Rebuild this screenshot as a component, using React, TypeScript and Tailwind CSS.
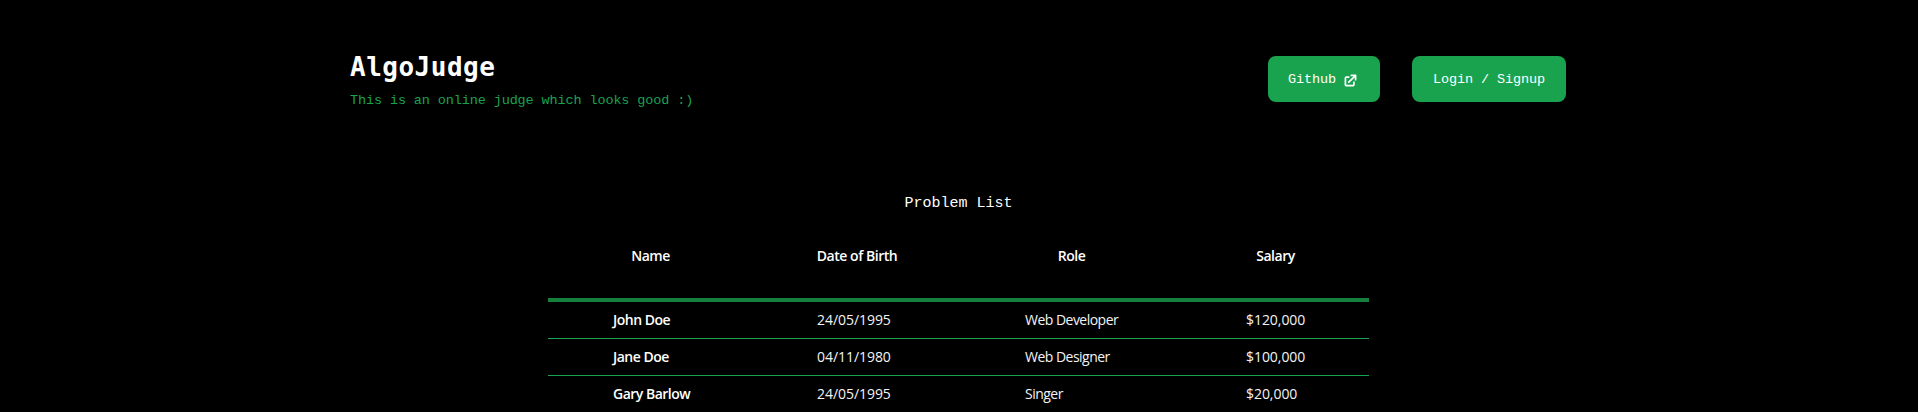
import { HiExternalLink } from "react-icons/hi";

const headings = ["Name", "Date of Birth", "Role", "Salary"];

const people = [
  { name: "John Doe", born: "24/05/1995", role: "Web Developer", salary: "$120,000" },
  { name: "Jane Doe", born: "04/11/1980", role: "Web Designer", salary: "$100,000" },
  { name: "Gary Barlow", born: "24/05/1995", role: "Singer", salary: "$20,000" },
];

const cell = "h-[37px] border-b border-[#1aa34f] p-0 pl-16 whitespace-nowrap";

export default function App() {
  return (
    <div className="h-[412px] overflow-hidden bg-black font-['Liberation_Mono',monospace] text-white">
      <div className="w-[1917px]">
        <header className="mx-auto flex h-[158px] w-[1217px] items-start justify-between">
          <div className="pt-[49px]">
            <h1 className="font-['DejaVu_Sans_Mono',monospace] text-[26px] leading-9 font-bold tracking-[0.5px]">AlgoJudge</h1>
            <p className="mt-1 text-[13.5px] leading-6 tracking-[-0.12px] text-[#1aa34f]">This is an online judge which looks good :)</p>
          </div>
          <nav className="flex gap-8 pr-px pt-[56px] text-[13.5px] tracking-[-0.1px]">
            <button className="flex h-[46px] w-[112px] items-center rounded-lg bg-[#1aa34f] pl-5">
              <span className="pt-0.5">Github</span>
              <HiExternalLink className="mt-0.5 ml-1.5 size-[17px]" />
            </button>
            <button className="h-[46px] w-[154px] rounded-lg bg-[#1aa34f] pt-0.5">Login / Signup</button>
          </nav>
        </header>
        <h2 className="pt-[34px] text-center text-[15px] leading-6">Problem List</h2>
        <table className="mx-auto mt-[30px] w-[821px] table-fixed border-separate border-spacing-0 font-['Open_Sans','Noto_Sans',sans-serif] text-[14px] leading-5">
          <colgroup>
            <col className="w-[205px]" />
            <col className="w-[208px]" />
            <col className="w-[221px]" />
            <col className="w-[187px]" />
          </colgroup>
          <thead>
            <tr>
              {headings.map((h) => (
                <th key={h} className="h-[56px] border-b-4 border-[#15803d] p-0 align-top font-semibold tracking-[-0.45px] whitespace-nowrap">
                  {h}
                </th>
              ))}
            </tr>
          </thead>
          <tbody>
            {people.map((p) => (
              <tr key={p.name}>
                <td className={`${cell} font-semibold tracking-[-0.5px]`}>
                  <span className="pl-px">{p.name}</span>
                </td>
                <td className={`${cell} tracking-[-0.05px] text-gray-100`}>{p.born}</td>
                <td className={`${cell} tracking-[-0.52px] text-gray-100`}>{p.role}</td>
                <td className={`${cell} tracking-[-0.05px] text-gray-100`}>{p.salary}</td>
              </tr>
            ))}
          </tbody>
        </table>
      </div>
    </div>
  );
}
